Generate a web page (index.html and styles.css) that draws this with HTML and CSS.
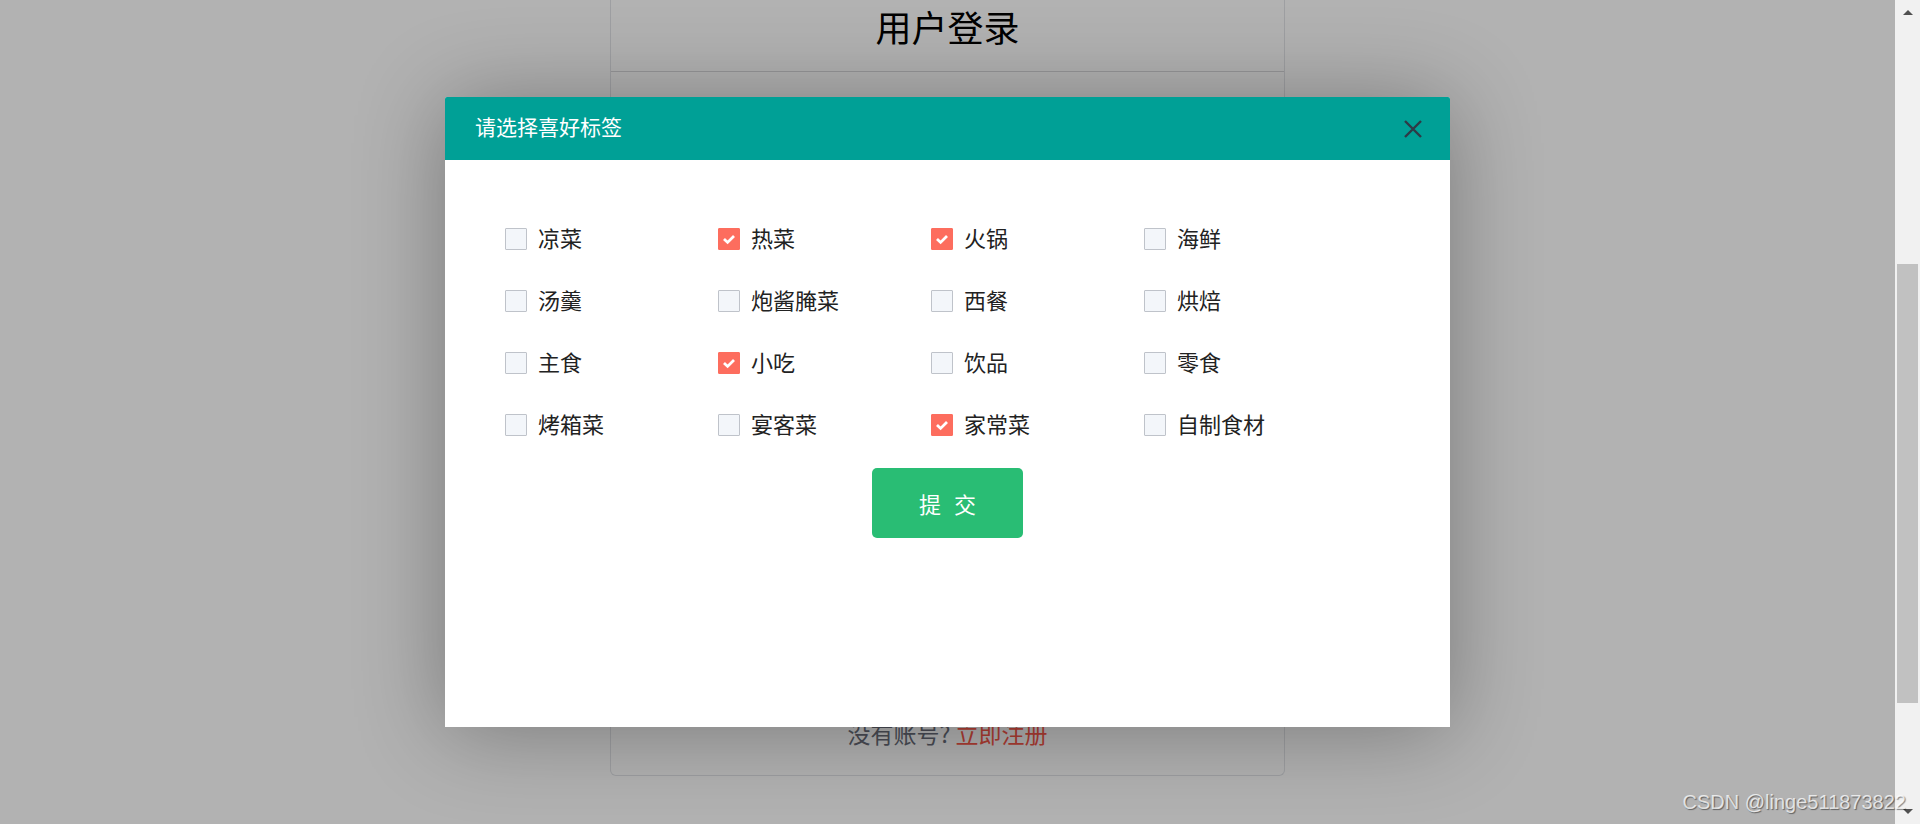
FILE: index.html
```html
<!DOCTYPE html>
<html lang="zh-CN">
<head>
<meta charset="utf-8">
<title>用户登录</title>
<link rel="stylesheet" href="styles.css">
</head>
<body>
<div class="page">
  <div class="main">
    <div class="card">
      <div class="card-head"><h1 class="card-title">用户登录</h1></div>
      <div class="card-foot">没有账号? <a class="reg" href="#">立即注册</a></div>
    </div>
    <div class="mask">
      <div class="modal">
        <div class="modal-head">
          <span class="modal-title">请选择喜好标签</span>
          <span class="close">
            <svg width="18" height="18" viewBox="0 0 18 18"><path d="M1 1 L17 17 M17 1 L1 17" stroke="#2e3a46" stroke-width="2.4" fill="none"/></svg>
          </span>
        </div>
        <div class="modal-body">
          <div class="tags">
            <label class="tag"><span class="box"></span><span class="name">凉菜</span></label>
            <label class="tag"><span class="box on"><svg width="20" height="20" viewBox="0 0 20 20"><path d="M5 10 L8.6 13.4 L15 7" stroke="#fff" stroke-width="2.8" fill="none"/></svg></span><span class="name">热菜</span></label>
            <label class="tag"><span class="box on"><svg width="20" height="20" viewBox="0 0 20 20"><path d="M5 10 L8.6 13.4 L15 7" stroke="#fff" stroke-width="2.8" fill="none"/></svg></span><span class="name">火锅</span></label>
            <label class="tag"><span class="box"></span><span class="name">海鲜</span></label>
            <label class="tag"><span class="box"></span><span class="name">汤羹</span></label>
            <label class="tag"><span class="box"></span><span class="name">炮酱腌菜</span></label>
            <label class="tag"><span class="box"></span><span class="name">西餐</span></label>
            <label class="tag"><span class="box"></span><span class="name">烘焙</span></label>
            <label class="tag"><span class="box"></span><span class="name">主食</span></label>
            <label class="tag"><span class="box on"><svg width="20" height="20" viewBox="0 0 20 20"><path d="M5 10 L8.6 13.4 L15 7" stroke="#fff" stroke-width="2.8" fill="none"/></svg></span><span class="name">小吃</span></label>
            <label class="tag"><span class="box"></span><span class="name">饮品</span></label>
            <label class="tag"><span class="box"></span><span class="name">零食</span></label>
            <label class="tag"><span class="box"></span><span class="name">烤箱菜</span></label>
            <label class="tag"><span class="box"></span><span class="name">宴客菜</span></label>
            <label class="tag"><span class="box on"><svg width="20" height="20" viewBox="0 0 20 20"><path d="M5 10 L8.6 13.4 L15 7" stroke="#fff" stroke-width="2.8" fill="none"/></svg></span><span class="name">家常菜</span></label>
            <label class="tag"><span class="box"></span><span class="name">自制食材</span></label>
          </div>
          <button class="submit" type="button">提 交</button>
        </div>
      </div>
    </div>
  </div>
  <div class="scrollbar">
    <div class="arrow"><span class="tri up"></span></div>
    <div class="track"><div class="thumb"></div></div>
    <div class="arrow"><span class="tri down"></span></div>
  </div>
  <div class="watermark">CSDN @linge511873822</div>
</div>
</body>
</html>
```

FILE: styles.css
```css
html, body {
  margin: 0;
  padding: 0;
}
body {
  font-family: "Noto Sans CJK SC", "Noto Sans", sans-serif;
  color: #222;
}
.page {
  position: relative;
  display: flex;
  width: 1920px;
  height: 824px;
  overflow: hidden;
}
.main {
  position: relative;
  flex: 1;
  background: #fff;
  display: flex;
  justify-content: center;
  align-items: flex-start;
}
.card {
  width: 675px;
  height: 776px;
  box-sizing: border-box;
  border: 1px solid #e2e4e8;
  border-top: none;
  border-radius: 0 0 6px 6px;
  display: flex;
  flex-direction: column;
}
.card-head {
  height: 72px;
  box-sizing: border-box;
  border-bottom: 1px solid #d8d9dc;
}
.card-title {
  margin: 0;
  font-size: 36px;
  line-height: 52px;
  font-weight: 400;
  text-align: center;
  color: #000;
}
.card-foot {
  margin-top: auto;
  padding-bottom: 26px;
  text-align: center;
  font-size: 23px;
  line-height: 32px;
  color: #6a6e7a;
}
.reg {
  color: #f9584a;
  text-decoration: none;
}
.mask {
  position: absolute;
  inset: 0;
  background: rgba(0, 0, 0, 0.3);
  display: flex;
  justify-content: center;
  align-items: flex-start;
  padding-top: 97px;
  box-sizing: border-box;
}
.modal {
  width: 1005px;
  height: 630px;
  background: #fff;
  border-radius: 2px 2px 0 0;
  box-shadow: 0 4px 90px rgba(0, 0, 0, 0.32);
  display: flex;
  flex-direction: column;
}
.modal-head {
  height: 63px;
  box-sizing: border-box;
  background: #00a096;
  border-radius: 2px 2px 0 0;
  display: flex;
  align-items: center;
  justify-content: space-between;
  padding: 0 28px 0 30px;
  color: #fff;
  font-size: 21px;
}
.modal-title {
  margin-bottom: 5px;
}
.close {
  display: flex;
  width: 18px;
  height: 18px;
}
.modal-body {
  padding: 48px 60px 0;
}
.tags {
  display: grid;
  grid-template-columns: repeat(4, 213px);
  grid-auto-rows: 62px;
}
.tag {
  display: flex;
  align-items: center;
  gap: 11px;
  font-size: 22px;
  color: #222;
}
.name {
  margin-bottom: 5px;
}
.box {
  width: 22px;
  height: 22px;
  box-sizing: border-box;
  border: 1px solid #bfc3ca;
  background: #f3f6fa;
  border-radius: 1px;
  display: flex;
  align-items: center;
  justify-content: center;
}
.box.on {
  background: #fd6d5e;
  border-color: #fd6d5e;
}
.submit {
  display: block;
  margin: 12px auto 0;
  width: 151px;
  height: 70px;
  border: none;
  border-radius: 5px;
  background: #29bd74;
  color: #fff;
  font-family: "Noto Sans CJK SC", sans-serif;
  font-size: 22px;
  letter-spacing: 4px;
  padding: 0 0 0 4px;
}
.scrollbar {
  width: 25px;
  background: #f1f1f1;
  display: flex;
  flex-direction: column;
}
.arrow {
  height: 25px;
  display: flex;
  align-items: center;
  justify-content: center;
}
.tri {
  width: 0;
  height: 0;
  border-left: 5px solid transparent;
  border-right: 5px solid transparent;
}
.tri.up {
  border-bottom: 5px solid #505050;
}
.tri.down {
  border-top: 5px solid #505050;
}
.track {
  flex: 1;
}
.thumb {
  margin: 239px 2px 0 2px;
  height: 439px;
  background: #c1c1c1;
}
.watermark {
  position: absolute;
  right: 14px;
  bottom: 12px;
  font-family: "Liberation Sans", Arial, sans-serif;
  font-size: 20px;
  line-height: 20px;
  color: rgba(255, 255, 255, 0.75);
  text-shadow: 1px 1px 1px rgba(0, 0, 0, 0.45);
}
```
